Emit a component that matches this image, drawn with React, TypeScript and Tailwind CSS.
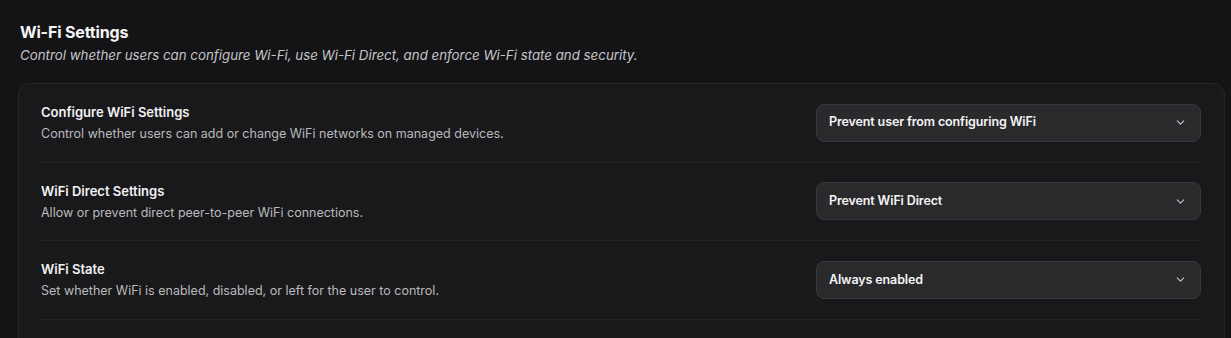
import React from 'react';
import { ChevronDown } from 'lucide-react';

interface SettingRowProps {
  title: string;
  description: string;
  value: string;
}

const rows: SettingRowProps[] = [
  {
    title: 'Configure WiFi Settings',
    description: 'Control whether users can add or change WiFi networks on managed devices.',
    value: 'Prevent user from configuring WiFi',
  },
  {
    title: 'WiFi Direct Settings',
    description: 'Allow or prevent direct peer-to-peer WiFi connections.',
    value: 'Prevent WiFi Direct',
  },
  {
    title: 'WiFi State',
    description: 'Set whether WiFi is enabled, disabled, or left for the user to control.',
    value: 'Always enabled',
  },
];

const SettingRow: React.FC<SettingRowProps> = ({ title, description, value }) => {
  return (
    <div className="flex items-center justify-between border-b border-[#242427] h-[78.6px]">
      <div className="pt-[1px]">
        <p className="text-[13px] font-semibold text-[#f2f2f3] leading-[18px]">{title}</p>
        <p className="text-[12.5px] text-[#b9b9bd] leading-[18px] mt-[4px]">{description}</p>
      </div>
      <button className="flex items-center justify-between w-[385px] h-[38px] rounded-lg border border-[#38383c] bg-[#2a2a2d] pl-3 pr-[13px] text-left">
        <span className="text-[12.5px] font-semibold text-[#f4f4f5] tracking-[-0.01em]">{value}</span>
        <ChevronDown className="w-[13px] h-[13px] text-[#c4c4c8]" strokeWidth={2} />
      </button>
    </div>
  );
};

export default function App() {
  return (
    <div
      className="w-[1231px] h-[338px] overflow-hidden bg-[#141416] pl-[18px] pr-[6px] pt-[22px]"
      style={{ fontFamily: 'Inter, "Noto Sans", sans-serif' }}
    >
      {/* Header */}
      <div className="pl-[2px]">
        <h2 className="text-[16px] font-bold text-[#f5f5f6] leading-[21px] tracking-[-0.01em]">Wi-Fi Settings</h2>
        <p className="text-[13.3px] italic text-[#c6c6ca] leading-[18px] mt-[3px]">
          Control whether users can configure Wi-Fi, use Wi-Fi Direct, and enforce Wi-Fi state and security.
        </p>
      </div>

      {/* Card */}
      <div className="mt-[19px] rounded-xl border border-[#262629] bg-[#19191c] pl-[22px] pr-[23px]">
        {rows.map((row) => (
          <SettingRow key={row.title} {...row} />
        ))}
        <div className="h-[40px]" />
      </div>
    </div>
  );
}
